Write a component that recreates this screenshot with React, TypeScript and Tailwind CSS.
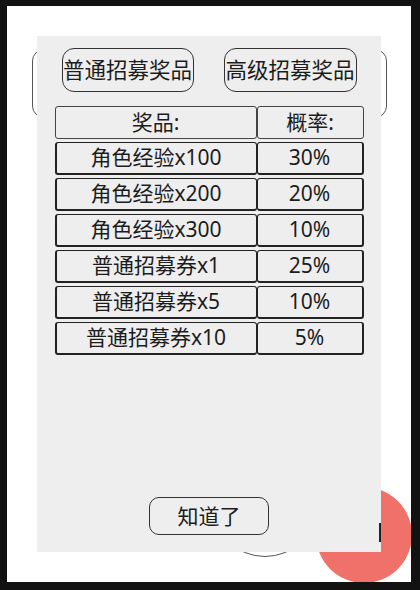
const rows = [
  { name: "角色经验x100", rate: "30%" },
  { name: "角色经验x200", rate: "20%" },
  { name: "角色经验x300", rate: "10%" },
  { name: "普通招募券x1", rate: "25%" },
  { name: "普通招募券x5", rate: "10%" },
  { name: "普通招募券x10", rate: "5%" },
];

export default function App() {
  return (
    <div className="h-[590px] w-[420px] bg-[#121212] pl-[7px] pt-[6px] font-['Noto_Sans','Noto_Sans_CJK_SC',sans-serif] text-[#1c1c1c]">
      <div className="relative h-[576px] w-[404px] overflow-hidden bg-white">
        {/* page behind the dialog */}
        <div className="absolute left-[25px] top-[43px] h-[69px] w-[355px] rounded-[12px] border-[1.5px] border-[#555]" />
        <div className="absolute left-[205px] top-[445px] h-[106px] w-[106px] rounded-full border-[1.5px] border-[#555]" />
        <div className="absolute left-[309px] top-[481px] h-[96px] w-[96px] rounded-full bg-[#ef7169]" />

        {/* dialog */}
        <div className="absolute left-[30px] top-[30px] flex h-[516px] w-[344px] flex-col items-center bg-[#eeeeee]">
          <div className="mt-[12px] flex gap-[30px]">
            <button className="flex h-[44px] w-[132px] items-center justify-center rounded-[12px] border-[1.5px] border-[#333] text-[21.5px] leading-none">
              普通招募奖品
            </button>
            <button className="flex h-[44px] w-[133px] items-center justify-center rounded-[12px] border-[1.5px] border-[#333] text-[21.5px] leading-none">
              高级招募奖品
            </button>
          </div>

          <div className="mt-[14px] flex w-[309px] flex-col gap-[3px]">
            <div className="flex h-[33px] text-[21px]">
              <div className="flex w-[202px] items-center justify-center rounded-[3px] border border-[#444]">
                奖品:
              </div>
              <div className="flex flex-1 items-center justify-center rounded-[3px] border border-[#444]">
                概率:
              </div>
            </div>
            {rows.map((r) => (
              <div key={r.name} className="flex h-[33px] text-[21px]">
                <div className="flex w-[202px] items-center justify-center rounded-[3px] border border-b-2 border-l-2 border-[#222]">
                  {r.name}
                </div>
                <div className="flex flex-1 items-center justify-center rounded-[3px] border border-b-2 border-r-2 border-[#222]">
                  {r.rate}
                </div>
              </div>
            ))}
          </div>

          <button className="mb-[17px] mt-auto flex h-[38px] w-[120px] items-center justify-center rounded-[10px] border-[1.5px] border-[#333] text-[21px] leading-none">
            知道了
          </button>
        </div>

        <div className="absolute left-[372px] top-[517px] h-[19px] w-[2px] bg-[#222]" />
      </div>
    </div>
  );
}
